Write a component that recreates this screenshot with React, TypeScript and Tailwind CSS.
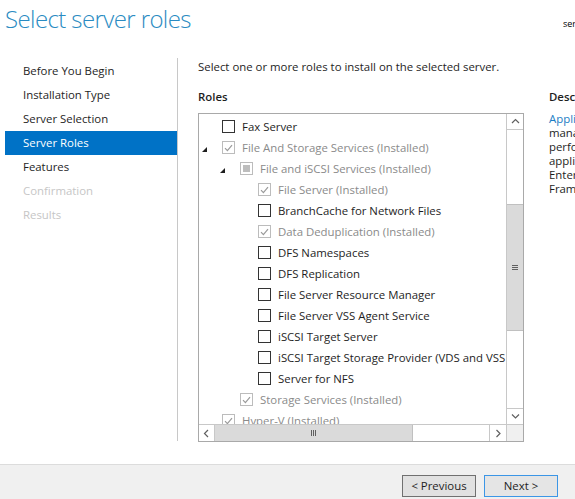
import React from "react";

type Row = {
  label: string;
  level: 0 | 1 | 2;
  state: "off" | "on" | "mixed";
  installed?: boolean;
  expander?: boolean;
};

const NAV = [
  { label: "Before You Begin", tone: "normal" },
  { label: "Installation Type", tone: "normal" },
  { label: "Server Selection", tone: "normal" },
  { label: "Server Roles", tone: "active" },
  { label: "Features", tone: "normal" },
  { label: "Confirmation", tone: "off" },
  { label: "Results", tone: "off" },
];

const ROWS: Row[] = [
  { label: "Fax Server", level: 0, state: "off" },
  { label: "File And Storage Services (Installed)", level: 0, state: "on", installed: true, expander: true },
  { label: "File and iSCSI Services (Installed)", level: 1, state: "mixed", installed: true, expander: true },
  { label: "File Server (Installed)", level: 2, state: "on", installed: true },
  { label: "BranchCache for Network Files", level: 2, state: "off" },
  { label: "Data Deduplication (Installed)", level: 2, state: "on", installed: true },
  { label: "DFS Namespaces", level: 2, state: "off" },
  { label: "DFS Replication", level: 2, state: "off" },
  { label: "File Server Resource Manager", level: 2, state: "off" },
  { label: "File Server VSS Agent Service", level: 2, state: "off" },
  { label: "iSCSI Target Server", level: 2, state: "off" },
  { label: "iSCSI Target Storage Provider (VDS and VSS hardware providers)", level: 2, state: "off" },
  { label: "Server for NFS", level: 2, state: "off" },
  { label: "Storage Services (Installed)", level: 1, state: "on", installed: true },
  { label: "Hyper-V (Installed)", level: 0, state: "on", installed: true },
];

const INDENT = ["pl-[3px]", "pl-[21px]", "pl-[39px]"];

const DESC = [
  "management and hosting of high-",
  "performance distributed business",
  "applications such as those built with",
  "Enterprise Services and .NET",
  "Framework 4.5.",
];

function Box({ state, installed }: { state: Row["state"]; installed?: boolean }) {
  return (
    <span
      className={`w-[13px] h-[13px] shrink-0 border grid place-items-center bg-white ${installed ? "border-[#bcbcbc]" : "border-[#333333]"}`}
    >
      {state === "on" && (
        <svg width="9" height="8" viewBox="0 0 9 8">
          <path d="M1 4.2 L3.4 6.6 L8 1.2" fill="none" stroke="#9a9a9a" strokeWidth="1.2" />
        </svg>
      )}
      {state === "mixed" && <span className="w-[7px] h-[7px] bg-[#bdbdbd]" />}
    </span>
  );
}

function Expander() {
  return (
    <svg width="5" height="5" viewBox="0 0 5 5" className="mt-[3px]">
      <polygon points="5,0 5,5 0,5" fill="#1e1e1e" />
    </svg>
  );
}

function Chevron({ dir }: { dir: "up" | "down" | "left" | "right" }) {
  const d = {
    up: "M1 5 L4.5 1.5 L8 5",
    down: "M1 1.5 L4.5 5 L8 1.5",
    left: "M5 1 L1.5 4.5 L5 8",
    right: "M1.5 1 L5 4.5 L1.5 8",
  }[dir];
  const vertical = dir === "up" || dir === "down";
  return (
    <svg width={vertical ? 9 : 7} height={vertical ? 7 : 9} viewBox={vertical ? "0 0 9 7" : "0 0 7 9"}>
      <path d={d} fill="none" stroke="#606060" strokeWidth="1.2" />
    </svg>
  );
}

export default function App() {
  return (
    <div
      className="w-[575px] h-[499px] bg-white flex flex-col overflow-hidden text-[11.4px] text-[#1e1e1e]"
      style={{ fontFamily: '"Open Sans", "Noto Sans", sans-serif' }}
    >
      {/* header */}
      <div className="h-[58px] shrink-0 flex items-start justify-between">
        <h1 className="ml-[5px] mt-[2px] text-[24px] tracking-[-0.6px] font-light leading-[34px] text-[#2a8bc2] whitespace-nowrap">
          Select server roles
        </h1>
        <span className="mt-[17px] mr-[-1px] text-[9px] text-black whitespace-nowrap">ser</span>
      </div>

      {/* body */}
      <div className="flex-1 min-h-0 flex">
        <nav className="w-[178px] shrink-0 flex">
          <ul className="w-[172px] ml-[5px] mt-[1px]">
            {NAV.map((n) => (
              <li
                key={n.label}
                className={`h-[24px] flex items-center pl-[18px] whitespace-nowrap ${
                  n.tone === "active"
                    ? "bg-[#0072c6] text-white"
                    : n.tone === "off"
                      ? "text-[#c6c6c6]"
                      : "text-[#1e1e1e]"
                }`}
              >
                {n.label}
              </li>
            ))}
          </ul>
          <div className="w-px h-[383px] bg-[#c8c8c8]" />
        </nav>

        <main className="flex-1 min-w-0 pl-[20px] overflow-hidden">
          <p className="h-[18px] leading-[18px] whitespace-nowrap">
            Select one or more roles to install on the selected server.
          </p>
          <div className="flex gap-[25px] mt-[11px]">
            <div className="w-[326px] shrink-0">
              <div className="h-[20px] leading-[20px] font-semibold">Roles</div>
              <div className="mt-[6px] h-[329px] border border-[#a9a9a9] flex flex-col">
                <div className="flex-1 min-h-0 flex">
                  <div className="flex-1 min-w-0 overflow-hidden pt-[2px]">
                    {ROWS.map((r) => (
                      <div key={r.label} className={`h-[21px] flex items-center whitespace-nowrap ${INDENT[r.level]}`}>
                        <span className="w-[20px] shrink-0 flex items-center">{r.expander && <Expander />}</span>
                        <Box state={r.state} installed={r.installed} />
                        <span className={`ml-[7px] ${r.installed ? "text-[#8a8a8a]" : "text-[#1e1e1e]"}`}>{r.label}</span>
                      </div>
                    ))}
                  </div>
                  {/* vertical scrollbar */}
                  <div className="w-[17px] shrink-0 border-l border-[#c8c8c8] flex flex-col bg-white">
                    <div className="h-[16px] grid place-items-center border-b border-[#c8c8c8]">
                      <Chevron dir="up" />
                    </div>
                    <div className="h-[74px]" />
                    <div className="h-[127px] bg-[#dadada] border-y border-[#c0c0c0] grid place-items-center">
                      <span className="flex flex-col gap-[1px]">
                        <span className="w-[6px] h-px bg-[#606060]" />
                        <span className="w-[6px] h-px bg-[#606060]" />
                        <span className="w-[6px] h-px bg-[#606060]" />
                      </span>
                    </div>
                    <div className="flex-1" />
                    <div className="h-[16px] grid place-items-center border-t border-[#c8c8c8]">
                      <Chevron dir="down" />
                    </div>
                  </div>
                </div>
                {/* horizontal scrollbar */}
                <div className="h-[17px] shrink-0 border-t border-[#c8c8c8] flex">
                  <div className="w-[16px] grid place-items-center border-r border-[#c8c8c8]">
                    <Chevron dir="left" />
                  </div>
                  <div className="w-[198px] bg-[#dadada] border-r border-[#c0c0c0] grid place-items-center">
                    <span className="flex gap-[1px]">
                      <span className="w-px h-[6px] bg-[#606060]" />
                      <span className="w-px h-[6px] bg-[#606060]" />
                      <span className="w-px h-[6px] bg-[#606060]" />
                    </span>
                  </div>
                  <div className="flex-1" />
                  <div className="w-[17px] grid place-items-center border-l border-[#c8c8c8]">
                    <Chevron dir="right" />
                  </div>
                  <div className="w-[17px] bg-[#f0f0f0] border-l border-[#c8c8c8]" />
                </div>
              </div>
            </div>

            <div className="shrink-0 whitespace-nowrap">
              <div className="h-[20px] leading-[20px] font-semibold">Description</div>
              <div className="mt-[5px] leading-[14px]">
                <div>
                  <span className="text-[#1a7dc4]">Application Server</span> provides central
                </div>
                {DESC.map((l) => (
                  <div key={l}>{l}</div>
                ))}
              </div>
            </div>
          </div>
        </main>
      </div>

      {/* footer */}
      <div className="h-[35px] shrink-0 border-t border-[#dcdcdc] bg-[#f0f0f0] flex justify-end items-start gap-[8px] pt-[10px] pr-[17px]">
        <button className="w-[74px] h-[22px] border border-[#707070] bg-[#e1e1e1] text-[#1e1e1e] leading-none">
          &lt; Previous
        </button>
        <button className="w-[74px] h-[22px] border border-[#3c96e6] bg-[#e5e5e5] text-[#1e1e1e] leading-none">
          Next &gt;
        </button>
      </div>
    </div>
  );
}
